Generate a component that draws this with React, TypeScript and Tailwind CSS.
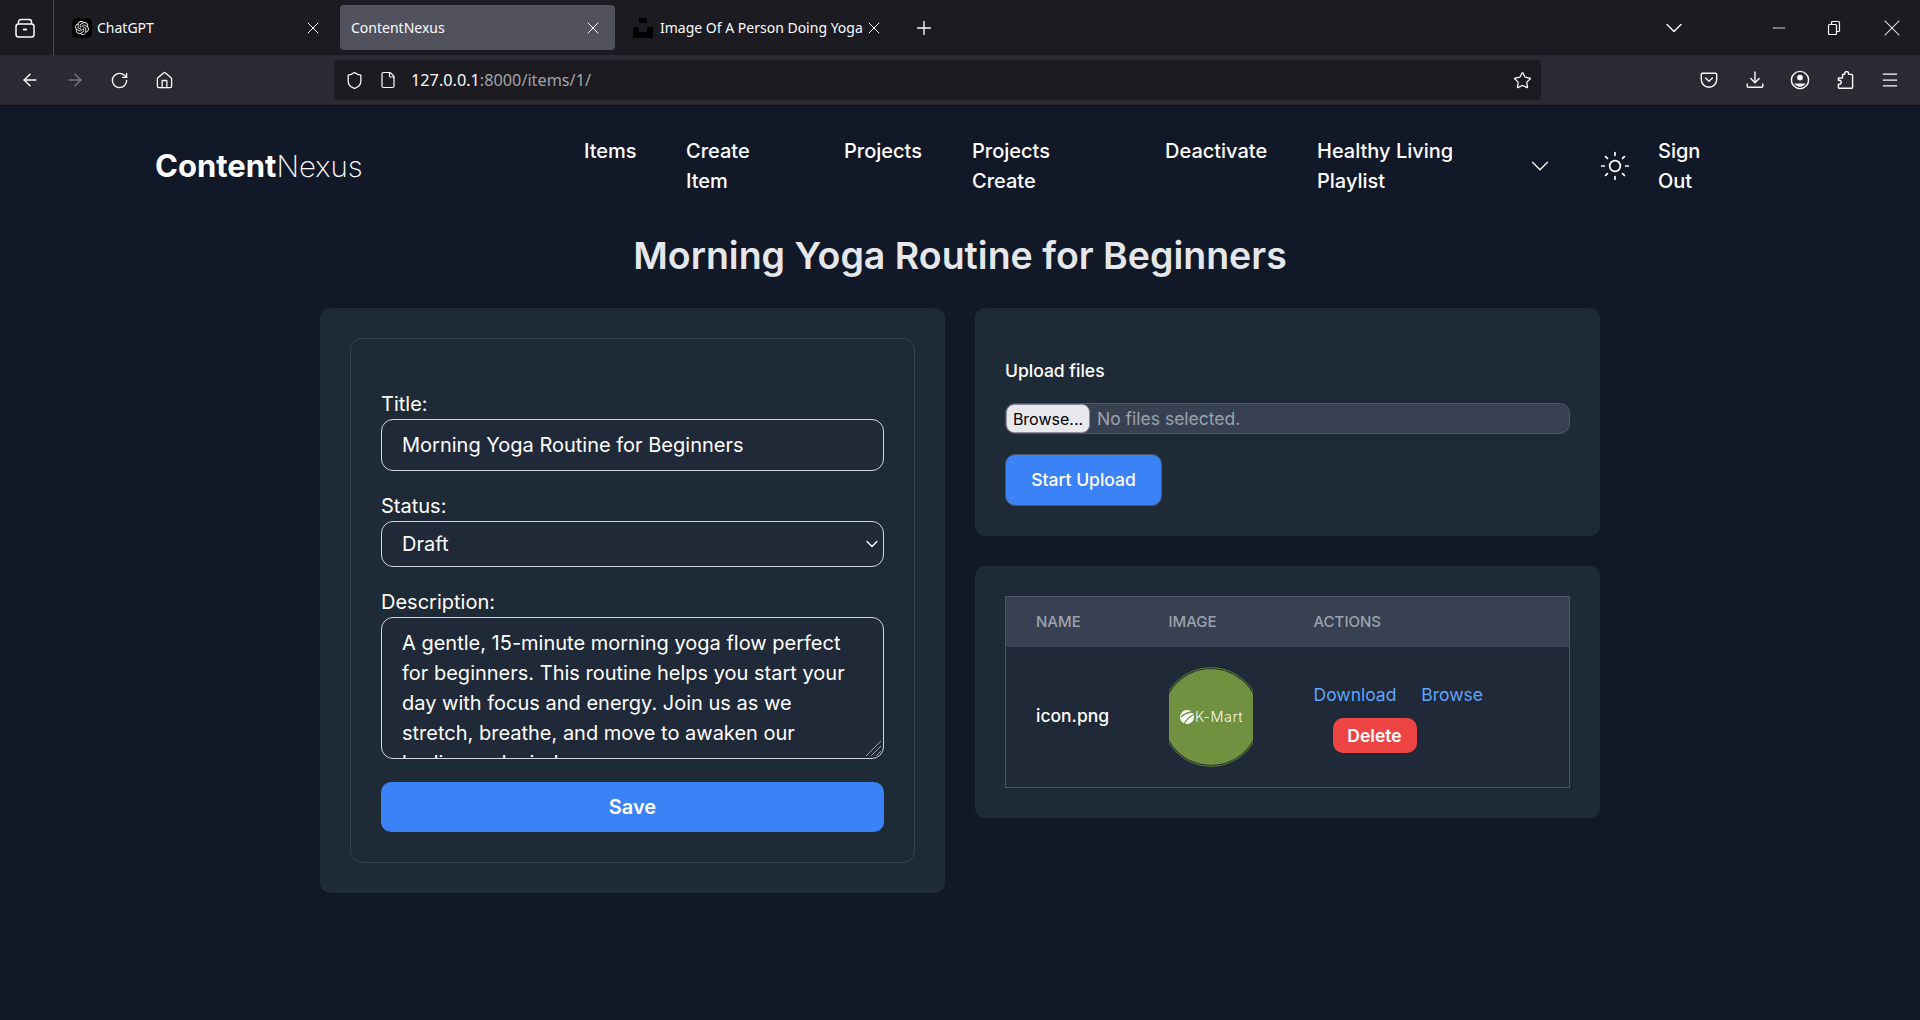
import React from "react";
import {
  ArrowLeft,
  ArrowRight,
  ChevronDown,
  Home,
  Menu,
  Minus,
  Plus,
  RotateCw,
  Shield,
  File,
  Star,
  Sun,
  X,
} from "lucide-react";
import { SiOpenai } from "react-icons/si";

const DESCRIPTION =
  "A gentle, 15-minute morning yoga flow perfect for beginners. This routine helps you start your day with focus and energy. Join us as we stretch, breathe, and move to awaken our bodies and minds.";

function TabsIcon() {
  return (
    <svg width="22" height="22" viewBox="0 0 22 22" fill="none" stroke="#fbfbfe" strokeWidth="1.5">
      <rect x="2" y="7" width="18" height="13" rx="2.5" />
      <path d="M4.5 7V5a2.5 2.5 0 0 1 2.5-2.5h8A2.5 2.5 0 0 1 17.5 5v2" />
      <path d="M9 12.5h4" strokeWidth="1.8" />
    </svg>
  );
}

function YogaFavicon() {
  return (
    <svg width="20" height="20" viewBox="0 0 20 20" fill="#000000">
      <rect x="6" y="0" width="8" height="5" />
      <path d="M0 9h6v5h8V9h6v11H0z" />
    </svg>
  );
}

function RestoreIcon() {
  return (
    <svg width="14" height="16" viewBox="0 0 14 16" fill="none" stroke="#fbfbfe" strokeWidth="1.2">
      <rect x="1.5" y="4.5" width="8" height="10" rx="1" />
      <path d="M4.5 4.5V2.5a1 1 0 0 1 1-1h6a1 1 0 0 1 1 1v8a1 1 0 0 1-1 1h-2" />
    </svg>
  );
}

function PocketIcon() {
  return (
    <svg width="18" height="18" viewBox="0 0 18 18" fill="none" stroke="#fbfbfe" strokeWidth="1.4" strokeLinecap="round" strokeLinejoin="round">
      <path d="M2.5 2.2h13a1.2 1.2 0 0 1 1.2 1.2v5.1a7.7 7.7 0 0 1-15.4 0V3.4a1.2 1.2 0 0 1 1.2-1.2z" />
      <path d="M5.6 7l3.4 3.2L12.4 7" />
    </svg>
  );
}

function DownloadIcon() {
  return (
    <svg width="18" height="18" viewBox="0 0 18 18" fill="none" stroke="#fbfbfe" strokeWidth="1.4" strokeLinecap="round" strokeLinejoin="round">
      <path d="M9 1v10.5M4.8 7.5L9 11.7l4.2-4.2" />
      <path d="M1.2 13v2a1.2 1.2 0 0 0 1.2 1.2h13.2a1.2 1.2 0 0 0 1.2-1.2v-2" />
    </svg>
  );
}

function ProfileIcon() {
  return (
    <svg width="20" height="20" viewBox="0 0 20 20" fill="none">
      <circle cx="10" cy="10" r="8.6" stroke="#fbfbfe" strokeWidth="1.4" />
      <circle cx="10" cy="7.6" r="2.9" fill="#fbfbfe" />
      <path d="M4.3 13.4h11.4a6.6 6.6 0 0 1-11.4 0z" fill="#fbfbfe" />
    </svg>
  );
}

function ExtensionIcon() {
  return (
    <svg width="18" height="18" viewBox="0 0 18 18" fill="none" stroke="#fbfbfe" strokeWidth="1.4" strokeLinejoin="round">
      <path d="M6.6 3.4h2V2.6a2 2 0 0 1 4 0v.8h3.2a.8.8 0 0 1 .8.8v12.2a.8.8 0 0 1-.8.8H3.2a.8.8 0 0 1-.8-.8v-3.2h.8a2 2 0 0 0 0-4h-.8V7h3.4a.8.8 0 0 0 .8-.8z" />
    </svg>
  );
}

function ResizeGrip() {
  return (
    <svg width="17" height="17" viewBox="0 0 17 17" fill="none" stroke="#9ca3af" strokeWidth="1">
      <path d="M1 16L16 1M6 16L16 6M11 16L16 11" />
    </svg>
  );
}

function KMartImage() {
  return (
    <svg width="84" height="100" viewBox="0 0 84 100" className="block">
      <circle cx="42" cy="50" r="49.4" fill="none" stroke="#5f7f38" strokeWidth="1" />
      <circle cx="42" cy="50" r="48" fill="#6f9140" />
      <circle cx="18" cy="50" r="7" fill="#ffffff" />
      <path d="M12 50C15 47 20 45 25 45M15 57C17 53 20 50 24 48" stroke="#6f9140" strokeWidth="1.3" fill="none" />
      <text x="26" y="55" fill="#f4f6ee" fontSize="14.5" fontFamily="Inter, sans-serif" fontWeight="300" letterSpacing="0.5">
        K-Mart
      </text>
    </svg>
  );
}

function Tab({
  label,
  icon,
  active,
  className,
}: {
  label: string;
  icon?: React.ReactNode;
  active?: boolean;
  className: string;
}) {
  return (
    <div
      className={`flex h-[45px] items-center rounded-[4px] ${active ? "bg-[#52525e]" : ""} ${className}`}
    >
      {icon}
      <span className="min-w-0 flex-1 overflow-hidden whitespace-nowrap text-[14px] text-[#fbfbfe]">{label}</span>
      <X size={20} strokeWidth={1.2} className="shrink-0 text-[#fbfbfe]" />
    </div>
  );
}

function BrowserChrome() {
  return (
    <div className="font-['Noto_Sans','Open_Sans',sans-serif]">
      <div className="flex h-[55px] items-center bg-[#1c1b22] pr-[14px]">
        <div className="flex h-full w-[54px] shrink-0 items-center justify-center border-r border-[#4a4a52] pr-[3px]">
          <TabsIcon />
        </div>
        <Tab
          className="ml-[18px] w-[251px]"
          label="ChatGPT"
          icon={
            <span className="mr-[5px] flex h-[20px] w-[20px] shrink-0 items-center justify-center rounded-[5px] bg-black">
              <SiOpenai size={14} className="text-[#e5e5e5]" />
            </span>
          }
        />
        <Tab active className="ml-[17px] w-[275px] pl-[11px] pr-[12px]" label="ContentNexus" />
        <Tab
          className="ml-[18px] w-[251px]"
          label="Image Of A Person Doing Yoga"
          icon={
            <span className="mr-[7px] shrink-0">
              <YogaFavicon />
            </span>
          }
        />
        <Plus size={22} strokeWidth={1.5} className="ml-[29px] text-[#fbfbfe]" />
        <div className="ml-auto flex items-center">
          <ChevronDown size={28} strokeWidth={1.2} className="text-[#fbfbfe]" />
          <Minus size={20} strokeWidth={1} className="ml-[81px] text-[#fbfbfe]" />
          <span className="ml-[38px] flex"><RestoreIcon /></span>
          <X size={28} strokeWidth={0.9} className="ml-[37px] text-[#fbfbfe]" />
        </div>
      </div>
      <div className="flex h-[51px] items-center border-b border-[#0c0c10] bg-[#2b2a33] pl-[20px]">
        <ArrowLeft size={20} strokeWidth={1.7} className="text-[#fbfbfe]" />
        <ArrowRight size={20} strokeWidth={1.7} className="ml-[25px] text-[#78777e]" />
        <RotateCw size={19} strokeWidth={1.7} className="ml-[25px] text-[#fbfbfe]" />
        <Home size={19} strokeWidth={1.6} className="ml-[26px] text-[#fbfbfe]" />
        <div className="ml-[160px] flex h-[40px] w-[1207px] shrink-0 items-center rounded-[4px] bg-[#1c1b22] pl-[11px] pr-[9px]">
          <Shield size={19} strokeWidth={1.6} className="text-[#fbfbfe]" />
          <File size={18} strokeWidth={1.6} className="ml-[15px] text-[#fbfbfe]" />
          <span className="ml-[14px] text-[16.25px] text-[#fbfbfe]">
            127.0.0.1<span className="text-[#a3a3a9]">:8000/items/1/</span>
          </span>
          <Star size={19} strokeWidth={1.6} className="ml-auto text-[#fbfbfe]" />
        </div>
        <div className="ml-auto flex items-center gap-[26px] pr-[20px]">
          <span className="mr-[2px] flex"><PocketIcon /></span>
          <DownloadIcon />
          <ProfileIcon />
          <ExtensionIcon />
          <Menu size={20} strokeWidth={1.5} className="text-[#fbfbfe]" />
        </div>
      </div>
    </div>
  );
}

function NavBar() {
  const link = "shrink-0 text-[20px] leading-[30px] font-medium text-white";
  return (
    <nav className="flex items-center pl-[155px] pt-[30px]">
      <div className="w-[429px] shrink-0 text-[30px] leading-[36px] text-white">
        <span className="text-[31px] font-bold">Content</span>
        <span className="text-[29.5px] font-extralight">Nexus</span>
      </div>
      <div className="flex items-start">
        <a className={`${link} w-[102px]`}>Items</a>
        <a className={`${link} w-[158px]`}>Create<br />Item</a>
        <a className={`${link} w-[128px]`}>Projects</a>
        <a className={`${link} w-[193px]`}>Projects<br />Create</a>
        <a className={`${link} w-[152px]`}>Deactivate</a>
        <a className={`${link} w-[208px]`}>Healthy Living<br />Playlist</a>
      </div>
      <ChevronDown size={30} strokeWidth={1} className="text-white" />
      <Sun size={32} strokeWidth={1.3} className="ml-[44px] text-white" />
      <a className="ml-[27px] text-[20px] leading-[30px] font-medium text-white">Sign<br />Out</a>
    </nav>
  );
}

function EditCard() {
  const label = "block text-[20px] leading-[30px] font-normal text-white";
  const field =
    "block w-full rounded-[12px] border border-[#d1d5db] bg-[#1f2937] px-[20px] text-[20px] leading-[30px] text-white outline-none";
  return (
    <div className="w-[625px] rounded-[10px] bg-[#1f2a37] p-[30px]">
      <form className="rounded-[12px] border border-[#374151] px-[30px] pb-[30px] pt-[50px]">
        <label className={label}>Title:</label>
        <input readOnly value="Morning Yoga Routine for Beginners" className={`${field} h-[52px]`} />
        <label className={`${label} mt-[20px]`}>Status:</label>
        <div className="relative">
          <select defaultValue="Draft" className={`${field} h-[46px] appearance-none`}>
            <option>Draft</option>
            <option>Published</option>
          </select>
          <ChevronDown size={20} strokeWidth={1.6} className="absolute right-[2px] top-[13px] text-white" />
        </div>
        <label className={`${label} mt-[20px]`}>Description:</label>
        <div className="relative">
          <textarea
            readOnly
            value={DESCRIPTION}
            className={`${field} h-[142px] resize-none overflow-hidden py-[10px]`}
          />
          <span className="absolute bottom-[2px] right-[2px] flex">
            <ResizeGrip />
          </span>
        </div>
        <button
          type="button"
          className="mt-[23px] block h-[50px] w-full rounded-[10px] bg-[#3b82f6] text-[20px] font-semibold text-white"
        >
          Save
        </button>
      </form>
    </div>
  );
}

function UploadCard() {
  return (
    <div className="rounded-[10px] bg-[#1f2a37] px-[30px] pb-[30px] pt-[51px]">
      <div className="text-[17.5px] leading-[24px] font-medium text-white">Upload files</div>
      <div className="mt-[20px] flex h-[31px] items-center overflow-hidden rounded-[10px] border border-[#4b5563] bg-[#374151]">
        <button type="button" className="h-full w-[84px] rounded-[8px] border border-[#8f8f9d] bg-[#e9e9ed] text-[16px] text-black">
          Browse...
        </button>
        <span className="ml-[7px] mt-[1px] text-[17.5px] text-[#9ca3af]">No files selected.</span>
      </div>
      <button
        type="button"
        className="mt-[20px] block h-[52px] w-[157px] rounded-[10px] border border-[#4b5563] bg-[#3b82f6] text-[17.5px] font-medium text-white"
      >
        Start Upload
      </button>
    </div>
  );
}

function FilesCard() {
  const th = "px-[30px] py-0 text-left text-[15px] font-medium uppercase text-[#9ca3af]";
  return (
    <div className="rounded-[10px] bg-[#1f2a37] p-[30px]">
      <table className="w-full table-fixed border-collapse border border-[#4b5563] bg-[#1f2937]">
        <thead className="bg-[#374151]">
          <tr className="h-[50px]">
            <th className={`${th} w-[133px]`}>Name</th>
            <th className={`${th} w-[145px]`}>Image</th>
            <th className={th}>Actions</th>
          </tr>
        </thead>
        <tbody>
          <tr>
            <td className="px-[30px] py-[20px] text-[17.5px] font-medium text-white">icon.png</td>
            <td className="px-[30px] py-[20px]">
              <KMartImage />
            </td>
            <td className="px-[30px] py-[20px] text-[17.5px] leading-[27px] text-[#60a5fa]">
              <a>Download</a> <a className="ml-[20px]">Browse</a>{" "}
              <button
                type="button"
                className="ml-[19px] mt-[10px] inline-block h-[35px] w-[84px] rounded-[10px] bg-[#ef4444] text-[17.5px] font-semibold text-white"
              >
                Delete
              </button>
            </td>
          </tr>
        </tbody>
      </table>
    </div>
  );
}

export default function App() {
  return (
    <div className="flex min-h-[1020px] flex-col bg-[#111827] font-['Inter',sans-serif]">
      <BrowserChrome />
      <NavBar />
      <h1 className="mt-[40px] text-center text-[37.5px] leading-[40px] font-semibold text-[#e5e7eb]">
        Morning Yoga Routine for Beginners
      </h1>
      <main className="mt-[32px] flex items-start justify-center gap-[30px]">
        <EditCard />
        <div className="flex w-[625px] flex-col gap-[30px]">
          <UploadCard />
          <FilesCard />
        </div>
      </main>
    </div>
  );
}
